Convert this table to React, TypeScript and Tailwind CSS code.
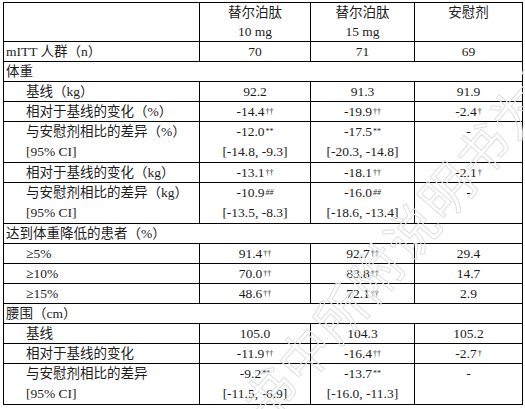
import React from 'react'

type Cell = { v: string; sup?: string }
type Row =
  | { kind: 'group'; label: string }
  | { kind: 'data'; label: string; indent?: boolean; cells: Cell[] }
  | { kind: 'diff'; label: string; cells: Cell[]; ci: string[] }

const rows: Row[] = [
  { kind: 'data', label: 'mITT 人群（n）', cells: [{ v: '70' }, { v: '71' }, { v: '69' }] },
  { kind: 'group', label: '体重' },
  { kind: 'data', label: '基线（kg）', indent: true, cells: [{ v: '92.2' }, { v: '91.3' }, { v: '91.9' }] },
  { kind: 'data', label: '相对于基线的变化（%）', indent: true, cells: [{ v: '-14.4', sup: '††' }, { v: '-19.9', sup: '††' }, { v: '-2.4', sup: '†' }] },
  { kind: 'diff', label: '与安慰剂相比的差异（%）', cells: [{ v: '-12.0', sup: '**' }, { v: '-17.5', sup: '**' }, { v: '-' }], ci: ['[-14.8, -9.3]', '[-20.3, -14.8]', ''] },
  { kind: 'data', label: '相对于基线的变化（kg）', indent: true, cells: [{ v: '-13.1', sup: '††' }, { v: '-18.1', sup: '††' }, { v: '-2.1', sup: '†' }] },
  { kind: 'diff', label: '与安慰剂相比的差异（kg）', cells: [{ v: '-10.9', sup: '##' }, { v: '-16.0', sup: '##' }, { v: '-' }], ci: ['[-13.5, -8.3]', '[-18.6, -13.4]', ''] },
  { kind: 'group', label: '达到体重降低的患者（%）' },
  { kind: 'data', label: '≥5%', indent: true, cells: [{ v: '91.4', sup: '††' }, { v: '92.7', sup: '††' }, { v: '29.4' }] },
  { kind: 'data', label: '≥10%', indent: true, cells: [{ v: '70.0', sup: '††' }, { v: '83.8', sup: '††' }, { v: '14.7' }] },
  { kind: 'data', label: '≥15%', indent: true, cells: [{ v: '48.6', sup: '††' }, { v: '72.1', sup: '††' }, { v: '2.9' }] },
  { kind: 'group', label: '腰围（cm）' },
  { kind: 'data', label: '基线', indent: true, cells: [{ v: '105.0' }, { v: '104.3' }, { v: '105.2' }] },
  { kind: 'data', label: '相对于基线的变化', indent: true, cells: [{ v: '-11.9', sup: '††' }, { v: '-16.4', sup: '††' }, { v: '-2.7', sup: '†' }] },
  { kind: 'diff', label: '与安慰剂相比的差异', cells: [{ v: '-9.2', sup: '**' }, { v: '-13.7', sup: '**' }, { v: '-' }], ci: ['[-11.5, -6.9]', '[-16.0, -11.3]', ''] },
]

function Val({ c }: { c: Cell }) {
  return (
    <>
      {c.v}
      {c.sup && (
        <sup className={`text-[8px] relative -top-[2px] ml-[1px] ${c.sup === '##' ? 'italic' : ''}`}>{c.sup}</sup>
      )}
    </>
  )
}

const td = 'border border-black align-top p-0'

export default function App() {
  return (
    <div
      className="relative w-[525px] h-[409px] bg-white overflow-hidden pt-[2px] pl-[3px] text-[#1c1c1c] text-[13.5px]"
      style={{ fontFamily: "'Liberation Serif', 'Noto Sans CJK SC', serif" }}
    >
      <table className="border-collapse w-[519px] table-fixed">
        <colgroup>
          <col className="w-[196px]" />
          <col className="w-[111px]" />
          <col className="w-[104px]" />
          <col className="w-[108px]" />
        </colgroup>
        <thead>
          <tr className="leading-[19px]">
            <th className={td}></th>
            <th className={`${td} font-normal text-center`}>替尔泊肽<br />10 mg</th>
            <th className={`${td} font-normal text-center`}>替尔泊肽<br />15 mg</th>
            <th className={`${td} font-normal text-center`}>安慰剂</th>
          </tr>
        </thead>
        <tbody>
          {rows.map((r, i) => {
            if (r.kind === 'group') {
              return (
                <tr key={i} className="leading-[19px]">
                  <td colSpan={4} className={`${td} pl-[2px]`}>{r.label}</td>
                </tr>
              )
            }
            if (r.kind === 'data') {
              return (
                <tr key={i} className="leading-[19px]">
                  <td className={`${td} ${r.indent ? 'pl-[22px]' : 'pl-[2px]'}`}>{r.label}</td>
                  {r.cells.map((c, j) => (
                    <td key={j} className={`${td} text-center`}><Val c={c} /></td>
                  ))}
                </tr>
              )
            }
            return (
              <tr key={i} className="leading-[20px]">
                <td className={`${td} pl-[22px]`}>{r.label}<br />[95% CI]</td>
                {r.cells.map((c, j) => (
                  <td key={j} className={`${td} text-center`}>
                    <Val c={c} />
                    <br />
                    {r.ci[j]}
                  </td>
                ))}
              </tr>
            )
          })}
        </tbody>
      </table>

      {/* watermark */}
      <div
        className="pointer-events-none absolute left-[170px] top-[210px] w-[470px] -rotate-[49deg] whitespace-nowrap text-[52px] leading-none tracking-[2px] text-transparent [-webkit-text-stroke:1px_#e0e0e0]"
        style={{ fontFamily: "'Noto Sans CJK SC', sans-serif" }}
      >
        书中所附说明书为准
      </div>
    </div>
  )
}
